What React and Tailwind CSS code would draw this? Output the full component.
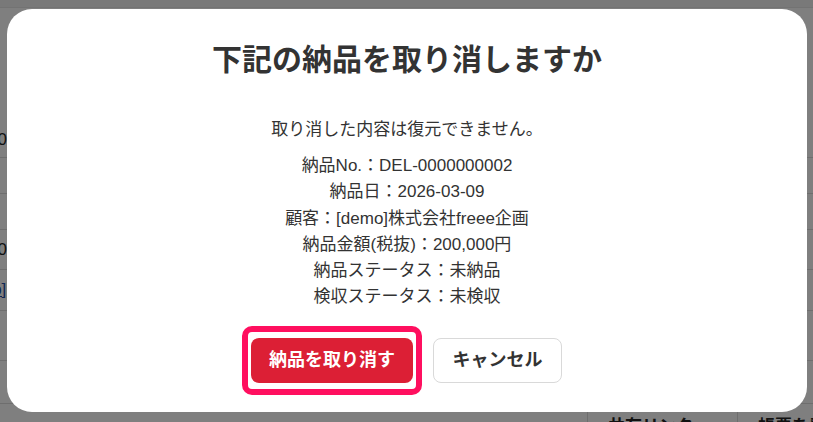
const FONT = "font-['Liberation_Sans','Noto_Sans_CJK_JP',sans-serif]";

const DETAILS = [
  '納品No.：DEL-0000000002',
  '納品日：2026-03-09',
  '顧客：[demo]株式会社freee企画',
  '納品金額(税抜)：200,000円',
  '納品ステータス：未納品',
  '検収ステータス：未検収',
];

// rows of the list page that sits behind the dialog
const ROWS = [
  { h: 'h-[36px]', text: '00' },
  { h: 'h-[36px]', text: '' },
  { h: 'h-[36px]', text: '' },
  { h: 'h-[40px]', text: '00' },
  { h: 'h-[41px]', text: 'mo]', link: true },
  { h: 'h-[50px]', text: '' },
];

function BackgroundPage() {
  return (
    <div className="absolute inset-0 bg-white">
      <div className="h-[8px] border-b border-[#e6e6e6] bg-[#f2f2f2]" />
      <div className="h-[114px]" />
      {ROWS.map((row, i) => (
        <div key={i} className={`${row.h} border-b border-[#dcdcdc] flex items-center overflow-hidden`}>
          {row.text && (
            <span className={`shrink-0 ${row.link ? '-ml-[22px] text-[#1f4fa8] underline' : '-ml-[12px] text-[#222]'} whitespace-nowrap text-[17px]`}>
              {row.text}
            </span>
          )}
        </div>
      ))}
      <div className="absolute left-0 top-[403px] w-full h-[40px] flex border-t border-[#dcdcdc]">
        <div className="w-[588px] shrink-0 border-r border-[#dcdcdc]" />
        <div className="w-[150px] shrink-0 border-r border-[#dcdcdc] pl-[20px] pt-[10px] text-[17px] font-bold text-[#222] whitespace-nowrap">共有リンク</div>
        <div className="pl-[20px] pt-[10px] text-[17px] font-bold text-[#222] whitespace-nowrap">帳票を発行</div>
      </div>
    </div>
  );
}

export default function App() {
  return (
    <div className={`relative w-[813px] h-[422px] overflow-hidden ${FONT}`}>
      <BackgroundPage />
      <div className="absolute inset-0 bg-black/50" />

      <div className="absolute left-[7px] top-[9px] w-[800px] h-[403px] rounded-[25px] bg-white flex flex-col items-center pt-[30px]">
        <h2 className="text-[30px] leading-[42px] font-bold text-[#333]">下記の納品を取り消しますか</h2>

        <p className="mt-[36px] text-[17px] leading-[26px] text-[#333]">取り消した内容は復元できません。</p>

        <div className="mt-[10px] flex flex-col items-center text-[17px] leading-[26.3px] text-[#333]">
          {DETAILS.map((line) => (
            <p key={line}>{line}</p>
          ))}
        </div>

        <div className="mt-[15px] mr-[10px] flex items-center gap-[11px]">
          <div className="border-[6px] border-[#ff0f5f] rounded-[10px] px-[3px] py-[6px]">
            <button className="w-[162px] h-[45px] rounded-[8px] bg-[#dc1f35] text-white text-[18px] font-bold">
              納品を取り消す
            </button>
          </div>
          <button className="w-[129px] h-[45px] rounded-[8px] border border-[#d9d9d9] bg-white text-[#333] text-[18px] font-bold">
            キャンセル
          </button>
        </div>
      </div>
    </div>
  );
}
